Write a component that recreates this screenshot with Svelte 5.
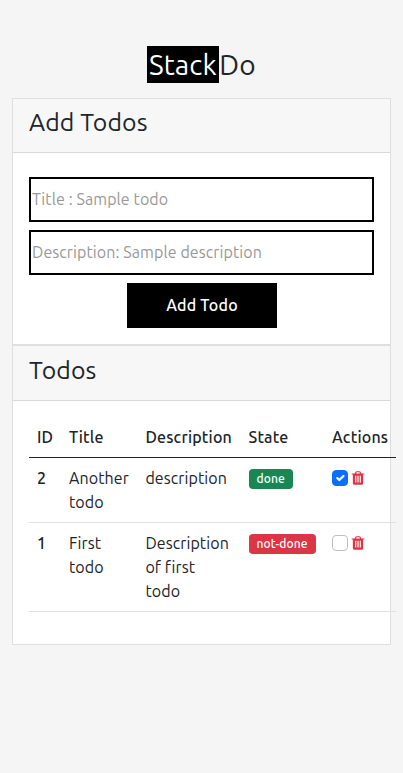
<script>
  let todos = $state([
    { id: 2, title: 'Another todo', description: 'description', done: true },
    { id: 1, title: 'First todo', description: 'Description of first todo', done: false }
  ]);
  let title = $state('');
  let description = $state('');

  function add() {
    if (!title) return;
    todos.unshift({ id: todos.length + 1, title, description, done: false });
    title = '';
    description = '';
  }

  function remove(id) {
    todos = todos.filter((t) => t.id !== id);
  }
</script>

<div class="page">
  <h1><span class="mark">Stack</span><span class="rest">Do</span></h1>

  <section class="card">
    <header><h2>Add Todos</h2></header>
    <div class="form">
      <input class="title" type="text" placeholder="Title : Sample todo" bind:value={title} />
      <input type="text" placeholder="Description: Sample description" bind:value={description} />
      <button class="add" onclick={add}>Add Todo</button>
    </div>
  </section>

  <section class="card">
    <header><h2>Todos</h2></header>
    <div class="list">
      <table>
        <colgroup>
          <col style="width:32px" /><col style="width:76.4px" /><col style="width:103.2px" />
          <col style="width:83.4px" /><col style="width:72px" />
        </colgroup>
        <thead>
          <tr><th>ID</th><th>Title</th><th>Description</th><th>State</th><th>Actions</th></tr>
        </thead>
        <tbody>
          {#each todos as todo (todo.id)}
            <tr>
              <th>{todo.id}</th>
              <td>{todo.title}</td>
              <td class="description">{todo.description}</td>
              <td>
                <span class="badge" class:done={todo.done}>{todo.done ? 'done' : 'not-done'}</span>
              </td>
              <td>
                <div class="actions">
                  <input type="checkbox" class="check" bind:checked={todo.done} aria-label="Done" />
                  <button class="trash" aria-label="Delete" onclick={() => remove(todo.id)}>
                    <svg viewBox="0 0 1792 1792" width="16" height="16" fill="#dc3545">
                      <path d="M704 1376v-704q0-14-9-23t-23-9h-64q-14 0-23 9t-9 23v704q0 14 9 23t23 9h64q14 0 23-9t9-23zm256 0v-704q0-14-9-23t-23-9h-64q-14 0-23 9t-9 23v704q0 14 9 23t23 9h64q14 0 23-9t9-23zm256 0v-704q0-14-9-23t-23-9h-64q-14 0-23 9t-9 23v704q0 14 9 23t23 9h64q14 0 23-9t9-23zm-544-992h448l-48-117q-7-9-17-11h-317q-10 2-17 11zm928 32v64q0 14-9 23t-23 9h-96v948q0 83-47 143.5t-113 60.5h-832q-66 0-113-58.5t-47-141.5v-952h-96q-14 0-23-9t-9-23v-64q0-14 9-23t23-9h309l70-167q15-37 54-63t79-26h320q40 0 79 26t54 63l70 167h309q14 0 23 9t9 23z" />
                    </svg>
                  </button>
                </div>
              </td>
            </tr>
          {/each}
        </tbody>
      </table>
    </div>
  </section>
</div>

<style>
  :global(body) {
    background: #f5f5f5;
  }
  .page,
  .page * {
    box-sizing: border-box;
  }
  .page {
    min-height: 773px;
    padding: 46px 12px 0;
    background: #f5f5f5;
    color: #212529;
    font-family: Ubuntu, 'Noto Sans', sans-serif;
    font-size: 16px;
    line-height: 24px;
    letter-spacing: 0.09px;
  }
  h1 {
    display: flex;
    justify-content: center;
    margin: 0 0 15px;
    height: 37px;
    font-size: 28.045px;
    font-weight: 400;
    line-height: 37px;
  }
  .mark {
    width: 72px;
    padding-left: 2px;
    background: #000;
    color: #fff;
    white-space: nowrap;
  }
  .rest {
    width: 37px;
    padding-left: 0.3px;
  }
  .card {
    width: 379px;
    border: 1px solid #dfdfdf;
    background: #fff;
  }
  header {
    height: 54px;
    padding: 8px 16px;
    border-bottom: 1px solid #d9d9d9;
    background: #f7f7f7;
  }
  .card + .card header {
    height: 55px;
    padding-top: 9px;
  }
  h2 {
    margin: 0;
    font-size: 24.827px;
    font-weight: 400;
    line-height: 30px;
  }
  .form {
    display: flex;
    flex-direction: column;
    gap: 8px;
    padding: 24px 16px 16px;
  }
  .form input {
    width: 345px;
    height: 45px;
    padding: 0 1px 2px;
    border: 2px solid #000;
    border-radius: 0;
    background: #fff;
    color: #212529;
    font: inherit;
    letter-spacing: inherit;
    outline: none;
  }
  .form input::placeholder {
    color: #999;
    opacity: 1;
  }
  .add {
    width: 150px;
    height: 45px;
    margin-left: 98px;
    padding: 0 0 2px;
    border: 0;
    background: #000;
    color: #fff;
    font: inherit;
    font-weight: 500;
    letter-spacing: 0.2px;
  }
  .list {
    padding: 16px 16px 32px;
  }
  table {
    width: 367px;
    table-layout: fixed;
    border-collapse: separate;
    border-spacing: 0;
  }
  th,
  td {
    padding: 8px;
    border-bottom: 1px solid #dee2e6;
    text-align: left;
    vertical-align: top;
    font-weight: 400;
  }
  th {
    font-weight: 500;
    white-space: nowrap;
    letter-spacing: 0.19px;
  }
  thead th {
    border-bottom-color: #212529;
  }
  td.description {
    padding-right: 10px;
  }
  .badge {
    display: block;
    width: 67px;
    height: 20px;
    margin-top: 3px;
    padding-left: 8px;
    border-radius: 4px;
    background: #dc3545;
    color: #fff;
    font-size: 12px;
    font-weight: 500;
    line-height: 20px;
  }
  .badge.done {
    width: 44px;
    background: #198754;
  }
  .actions {
    display: flex;
    gap: 1.6px;
    margin-top: 4px;
  }
  .check {
    appearance: none;
    flex: none;
    width: 16px;
    height: 16px;
    margin: 0;
    border: 1px solid #bfbfbf;
    border-radius: 4px;
    background: #fff;
  }
  .check:checked {
    border-color: #0d6efd;
    background: #0d6efd
      url("data:image/svg+xml,%3csvg xmlns='http://www.w3.org/2000/svg' viewBox='0 0 20 20'%3e%3cpath fill='none' stroke='%23fff' stroke-linecap='round' stroke-linejoin='round' stroke-width='3' d='M6 10l3 3l6-6'/%3e%3c/svg%3e")
      center / contain no-repeat;
  }
  .trash {
    width: 16px;
    height: 16px;
    padding: 0;
    border: 0;
    background: none;
  }
  .trash svg {
    display: block;
  }
</style>
